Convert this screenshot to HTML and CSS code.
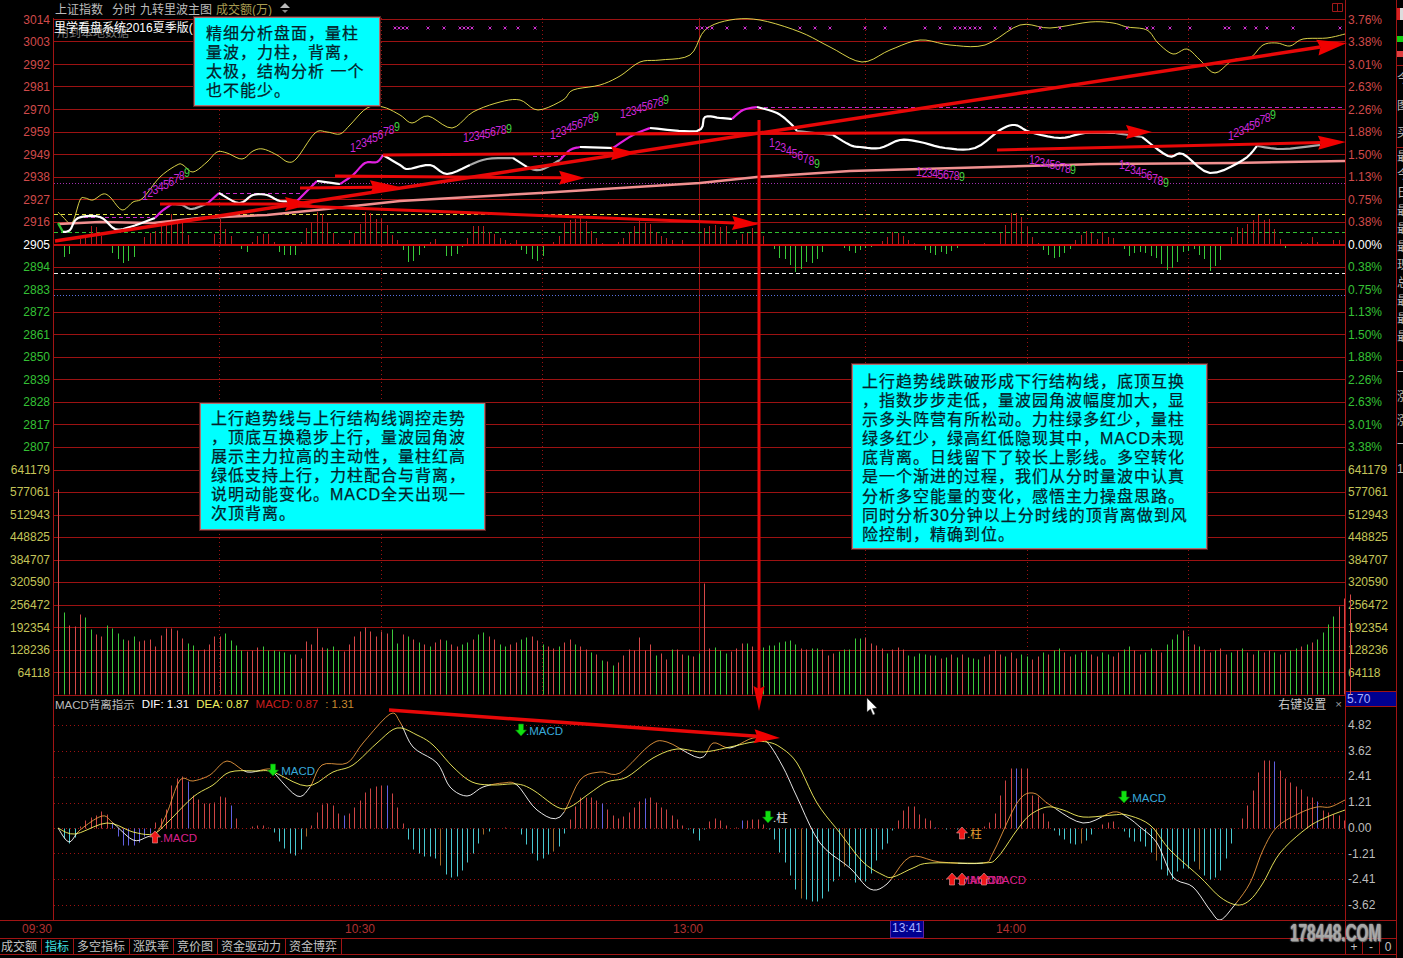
FILE: index.html
```html
<!DOCTYPE html>
<html lang="zh-CN">
<head>
    <meta charset="UTF-8">
    <title>上证指数 分时</title>
    <link rel="stylesheet" href="styles.css">
</head>
<body>
    <div class="terminal">
        <div class="scale-left" id="scaleLeft"></div>

        <div class="plot">
            <svg class="canvas" id="canvas" width="1292" height="920" viewBox="53 0 1292 920"></svg>

            <div class="chart-head">
                <span class="head-name">上证指数</span>
                <span class="head-mode">分时</span>
                <span class="head-main">九转里波主图</span>
                <span class="head-vol">成交额(万)</span>
                <svg class="head-icon" width="12" height="11" viewBox="0 0 12 11">
                    <path d="M6 0 L11 5 L1 5 Z" fill="#bbb"/>
                    <path d="M3 7 L9 7 L6 10 Z" fill="#888"/>
                </svg>
            </div>

            <div class="price-panel">
                <div class="note-under">用到本地数据</div>
                <div class="note-top">里学看盘系统2016夏季版(</div>
                <svg class="pane-icon" width="11" height="9" viewBox="0 0 11 9">
                    <path d="M0.5 0.5 H10.5 V8.5 H0.5 Z M5.5 0.5 V8.5" fill="none" stroke="#a01818"/>
                </svg>

                <div class="callout callout-top">
                    精细分析盘面，量柱<br>
                    量波，力柱，背离，<br>
                    太极，结构分析 一个<br>
                    也不能少。
                </div>
                <div class="callout callout-left">
                    上行趋势线与上行结构线调控走势<br>
                    ，顶底互换稳步上行，量波园角波<br>
                    展示主力拉高的主动性，量柱红高<br>
                    绿低支持上行，力柱配合与背离，<br>
                    说明动能变化。MACD全天出现一<br>
                    次顶背离。
                </div>
                <div class="callout callout-right">
                    上行趋势线跌破形成下行结构线，底顶互换<br>
                    ，指数步步走低，量波园角波幅度加大，显<br>
                    示多头阵营有所松动。力柱绿多红少，量柱<br>
                    绿多红少，绿高红低隐现其中，MACD未现<br>
                    底背离。日线留下了较长上影线。多空转化<br>
                    是一个渐进的过程，我们从分时量波中认真<br>
                    分析多空能量的变化，感悟主力操盘思路。<br>
                    同时分析30分钟以上分时线的顶背离做到风<br>
                    险控制，精确到位。
                </div>
            </div>

            <div class="macd-head">
                <span class="macd-name">MACD背离指示</span>
                <span class="macd-dif">DIF: 1.31</span>
                <span class="macd-dea">DEA: 0.87</span>
                <span class="macd-val">MACD: 0.87</span>
                <span class="macd-extra">: 1.31</span>
                <span class="macd-setting">右键设置</span>
                <span class="macd-close">×</span>
            </div>
        </div>

        <div class="scale-right" id="scaleRight"></div>

        <div class="side">
            <div class="side-stock"></div>
            <div class="side-green"></div>
            <div class="side-red"></div>
            <div class="side-text side-top">今<br>图<br>买</div>
            <div class="side-text side-list">最<br>今<br>日<br>最<br>最<br>最<br>现<br>总<br>最<br>最<br>最</div>
            <div class="side-text side-foot">一<br>涨<br>涨<br>一<br>1</div>
        </div>

        <div class="timeline">
            <span class="tick tick-0930">09:30</span>
            <span class="tick tick-1030">10:30</span>
            <span class="tick tick-1300">13:00</span>
            <span class="tick tick-now">13:41</span>
            <span class="tick tick-1400">14:00</span>
        </div>

        <div class="tabs">
            <span class="tab tab-first">成交额</span>
            <span class="tab tab-on">指标</span>
            <span class="tab">多空指标</span>
            <span class="tab">涨跌率</span>
            <span class="tab">竞价图</span>
            <span class="tab">资金驱动力</span>
            <span class="tab">资金博弈</span>
        </div>

        <div class="zoom-btns">
            <span>+</span>
            <span>-</span>
            <span>0</span>
        </div>

        <div class="watermark">178448.COM</div>
    </div>

    <script src="chart.js"></script>
</body>
</html>
```

FILE: styles.css
```css
html, body {
    margin: 0;
    padding: 0;
    background-color: #000;
    overflow: hidden;
}

body {
    font-family: "Liberation Sans", "Noto Sans CJK SC", sans-serif;
    font-size: 12px;
    color: #bbb;
}

.terminal {
    position: relative;
    display: grid;
    grid-template-columns: 53px 1292px 51px 7px;
    grid-template-rows: 920px 18px 17px 3px;
    width: 1403px;
    height: 958px;
    overflow: hidden;
}

/* price / volume scales */
.scale-left {
    padding-top: 8.6px;
    text-align: right;
    padding-right: 3px;
}

.scale-right {
    box-sizing: border-box;
    border-left: 1px solid #a01414;
    padding-top: 8.6px;
    padding-left: 2px;
}

.row {
    height: 22.53px;
    line-height: 22.53px;
    white-space: nowrap;
}

.up { color: #d04a4a; }
.down { color: #35c035; }
.flat { color: #fff; }
.vol { color: #c4c458; }

.macd-top {
    box-sizing: border-box;
    height: 16px;
    line-height: 14px;
    margin: 7px 0 0 -2px;
    padding-left: 1px;
    background-color: #000090;
    border-top: 1px solid #a01414;
    border-bottom: 1px solid #a01414;
    color: #a8b0ff;
}

.macd-rows {
    padding-top: 6px;
}

.macd-row {
    height: 25.7px;
    line-height: 25.7px;
    color: #bdbdbd;
}

/* main drawing area */
.plot {
    position: relative;
    display: grid;
    grid-template-rows: 18px 677px 225px;
}

.canvas {
    position: absolute;
    top: 0;
    left: 0;
    overflow: visible;
}

.chart-head {
    position: relative;
    display: flex;
    align-items: center;
    height: 16px;
    padding-left: 2px;
    white-space: nowrap;
}

.head-mode { margin-left: 9px; }
.head-main { margin-left: 4px; }
.head-vol { margin-left: 4px; color: #a89c50; }
.head-icon { margin-left: 7px; }

.price-panel {
    position: relative;
}

.note-top, .note-under {
    position: absolute;
    left: 1px;
    white-space: nowrap;
}

.note-top { top: 0; color: #fff; }
.note-under { top: 5px; left: 4px; color: #777; }

.pane-icon {
    position: absolute;
    top: -15px;
    right: 2px;
}

.callout {
    position: absolute;
    box-sizing: border-box;
    background-color: #00ffff;
    border: 1px solid #b07070;
    box-shadow: 0 0 0 1px #5a2020;
    color: #06222a;
    font-size: 16px;
    letter-spacing: 1px;
    line-height: 19.1px;
    white-space: nowrap;
    -webkit-text-stroke: 0.25px #06222a;
}

.callout-top {
    left: 141px;
    top: -1px;
    width: 186px;
    height: 89px;
    padding: 6px 0 0 11px;
}

.callout-left {
    left: 147px;
    top: 385px;
    width: 285px;
    height: 127px;
    padding: 5px 0 0 10px;
}

.callout-right {
    left: 799px;
    top: 346px;
    width: 355px;
    height: 185px;
    padding: 7px 0 0 9px;
}

.macd-head {
    position: relative;
    display: flex;
    align-items: center;
    height: 17px;
    padding-left: 2px;
    font-size: 11.5px;
    white-space: nowrap;
}

.macd-dif { margin-left: 7px; color: #fff; }
.macd-dea { margin-left: 7px; color: #f0f060; }
.macd-val { margin-left: 7px; color: #c81e1e; }
.macd-extra { margin-left: 7px; color: #c88a30; }
.macd-setting { margin-left: auto; margin-right: 9px; font-size: 12px; color: #c8c8c8; }
.macd-close { margin-right: 3px; color: #999; }

/* clipped strip at the right edge */
.side {
    grid-row: 1 / 5;
    grid-column: 4;
    box-sizing: border-box;
    border-left: 1px solid #a01414;
    overflow: hidden;
    color: #b8b8b8;
}

.side-stock {
    height: 12px;
    margin-top: 8px;
    background: linear-gradient(90deg, #d82020 3px, #ddd 3px);
}

.side-green, .side-red {
    height: 6px;
}

.side-green { margin-top: 16px; background-color: #10d010; }
.side-red { margin-top: 9px; background-color: #e04040; }

.side-text {
    white-space: nowrap;
    border-top: 1px solid #a01414;
}

.side-top { margin-top: 8px; line-height: 27px; }
.side-list { line-height: 18px; padding-bottom: 14px; }
.side-foot { line-height: 24px; }

.timeline {
    grid-column: 1 / 4;
    position: relative;
    border-top: 1px solid #a01414;
    box-sizing: border-box;
}

.timeline::after {
    content: "";
    position: absolute;
    left: 1345px;
    top: 0;
    bottom: 0;
    width: 1px;
    background-color: #a01414;
}

.tick {
    position: absolute;
    top: 1px;
    line-height: 15px;
    color: #b03030;
}

.tick-0930 { left: 22px; }
.tick-1030 { left: 345px; }
.tick-1300 { left: 673px; }
.tick-1400 { left: 996px; }

.tick-now {
    left: 890px;
    top: 0;
    width: 32px;
    height: 16px;
    text-align: center;
    background-color: #000090;
    border: 1px solid #5a20a0;
    border-width: 0 1px 1px 1px;
    color: #a8b0ff;
}

.tabs {
    grid-column: 1 / 3;
    display: flex;
    box-sizing: border-box;
    border-top: 1px solid #a01414;
    border-bottom: 1px solid #a01414;
    line-height: 17px;
}

.tab {
    padding: 0 3.5px;
    border-right: 1px solid #a01414;
    color: #c4c4c4;
}

.tab-first { padding-left: 1px; }
.tab-on { color: #40e0e0; }

.zoom-btns {
    grid-column: 3;
    display: flex;
    box-sizing: border-box;
    border-top: 1px solid #a01414;
    border-bottom: 1px solid #a01414;
    border-left: 1px solid #a01414;
    line-height: 17px;
    color: #c4c4c4;
}

.zoom-btns span {
    width: 16px;
    text-align: center;
    border-right: 1px solid #a01414;
}

.zoom-btns span:last-child {
    border-right: none;
}

.watermark {
    position: absolute;
    left: 1290px;
    top: 923px;
    font-weight: bold;
    font-size: 24px;
    line-height: 20px;
    color: #a8a8a8;
    text-shadow: 1px 1px 1px #777, 0 0 2px #ddd;
    white-space: nowrap;
    transform: scaleX(0.64);
    transform-origin: left center;
}
```

FILE: chart.js
```js
const NS = 'http://www.w3.org/2000/svg';
const canvas = document.getElementById('canvas');

const GRID = '#9c1212';
const barX = i => Math.round(58.4 + 5.38 * i) + 0.5;

function add(tag, attrs, text) {
    const el = document.createElementNS(NS, tag);
    for (let k in attrs) el.setAttribute(k, attrs[k]);
    if (text !== undefined) el.textContent = text;
    canvas.appendChild(el);
    return el;
}

function hline(y, x1, x2, color, dash, width) {
    add('line', { x1, y1: y, x2, y2: y, stroke: color, 'stroke-width': width || 1, 'stroke-dasharray': dash || 'none' });
}

function vline(x, y1, y2, color, dash, width) {
    add('line', { x1: x, y1, x2: x, y2, stroke: color, 'stroke-width': width || 1, 'stroke-dasharray': dash || 'none' });
}

// catmull-rom sampling so the lines come out curved
function sample(pts) {
    const out = [];
    for (let i = 0; i < pts.length - 1; i++) {
        const p0 = pts[Math.max(i - 1, 0)], p1 = pts[i], p2 = pts[i + 1], p3 = pts[Math.min(i + 2, pts.length - 1)];
        for (let t = 0; t < 1; t += 0.2) {
            const t2 = t * t, t3 = t2 * t;
            out.push([
                0.5 * (2 * p1[0] + (p2[0] - p0[0]) * t + (2 * p0[0] - 5 * p1[0] + 4 * p2[0] - p3[0]) * t2 + (3 * p1[0] - p0[0] - 3 * p2[0] + p3[0]) * t3),
                0.5 * (2 * p1[1] + (p2[1] - p0[1]) * t + (2 * p0[1] - 5 * p1[1] + 4 * p2[1] - p3[1]) * t2 + (3 * p1[1] - p0[1] - 3 * p2[1] + p3[1]) * t3)
            ]);
        }
    }
    out.push(pts[pts.length - 1]);
    return out;
}

function polyline(pts, color, width) {
    add('polyline', {
        points: pts.map(p => p.join(',')).join(' '),
        fill: 'none', stroke: color, 'stroke-width': width, 'stroke-linejoin': 'round'
    });
}

function bars(items, base, color) {
    // items: [index, height] pairs, positive height goes up
    const d = items.map(([i, h]) => `M${barX(i)} ${base}V${base - h}`).join('');
    add('path', { d, stroke: color, 'stroke-width': 1, fill: 'none' });
}

function arrow(x1, y1, x2, y2, width, len, half) {
    const a = Math.atan2(y2 - y1, x2 - x1);
    const cos = Math.cos(a), sin = Math.sin(a);
    const bx = x2 - cos * len, by = y2 - sin * len;
    const nx = bx + cos * 3, ny = by + sin * 3;
    add('line', { x1, y1, x2: nx, y2: ny, stroke: '#e80808', 'stroke-width': width });
    const head = [
        [x2, y2],
        [bx - sin * half, by + cos * half],
        [nx, ny],
        [bx + sin * half, by - cos * half]
    ];
    add('polygon', { points: head.map(p => p.join(',')).join(' '), fill: '#f00000' });
}

function digits(x1, y1, x2, y2) {
    for (let k = 0; k < 9; k++) {
        const x = x1 + (x2 - x1) * k / 8;
        const y = y1 + (y2 - y1) * k / 8 + 5;
        add('text', {
            transform: `translate(${x} ${y}) scale(0.82 1)`,
            fill: k === 8 ? '#40d040' : '#c828d8',
            'text-anchor': 'middle',
            'font-size': 13
        }, k + 1);
    }
}

function signal(x, y, dir, label, color) {
    const up = 'M0 -6 L5.5 0 L2.5 0 L2.5 6 L-2.5 6 L-2.5 0 L-5.5 0 Z';
    const down = 'M-2.5 -6 L2.5 -6 L2.5 0 L5.5 0 L0 6 L-5.5 0 L-2.5 0 Z';
    add('path', {
        d: dir === 'up' ? up : down,
        transform: `translate(${x} ${y})`,
        fill: dir === 'up' ? '#f01818' : '#10e010',
        stroke: dir === 'up' ? '#e8a0a0' : '#087008',
        'stroke-width': 0.6
    });
    add('text', { x: x + 5, y: y + 5, fill: color, 'font-size': 11.5 }, label);
}

/* ---------- scales ---------- */
function fillScales() {
    const prices = ['3014', '3003', '2992', '2981', '2970', '2959', '2949', '2938', '2927', '2916', '2905',
        '2894', '2883', '2872', '2861', '2850', '2839', '2828', '2817', '2807'];
    const pcts = ['3.76%', '3.38%', '3.01%', '2.63%', '2.26%', '1.88%', '1.50%', '1.13%', '0.75%', '0.38%', '0.00%',
        '0.38%', '0.75%', '1.13%', '1.50%', '1.88%', '2.26%', '2.63%', '3.01%', '3.38%'];
    const volumes = ['641179', '577061', '512943', '448825', '384707', '320590', '256472', '192354', '128236', '64118'];
    const cls = i => (i < 10 ? 'up' : i === 10 ? 'flat' : 'down');

    const row = (text, c) => `<div class="row ${c}">${text}</div>`;
    document.getElementById('scaleLeft').innerHTML =
        prices.map((t, i) => row(t, cls(i))).join('') + volumes.map(t => row(t, 'vol')).join('');

    const macd = ['4.82', '3.62', '2.41', '1.21', '0.00', '-1.21', '-2.41', '-3.62'];
    document.getElementById('scaleRight').innerHTML =
        pcts.map((t, i) => row(t, cls(i))).join('') + volumes.map(t => row(t, 'vol')).join('') +
        '<div class="macd-top">5.70</div><div class="macd-rows">' +
        macd.map(t => `<div class="macd-row">${t}</div>`).join('') + '</div>';
}

/* ---------- grid ---------- */
function drawGrid() {
    for (let k = 0; k <= 30; k++) {
        if (k === 10) continue;
        hline(Math.round(18.9 + 22.53 * k) + 0.5, 53, 1345, GRID);
    }
    [219.5, 381.5, 542.5, 865.5, 1027.5, 1188.5].forEach(x => vline(x, 18, 695, GRID, '1 3'));
    vline(699.5, 18, 695, GRID);
    vline(53.5, 18, 920, '#a01414');

    [725.5, 751.5, 777.5, 803.5, 828.5, 853.5, 879.5, 905.5].forEach(y => hline(y, 54, 1345, GRID, '1 3'));

    hline(183.5, 54, 1345, '#a030b0', '1 2');
    hline(214.5, 54, 1345, '#e0e040', '4 3');
    hline(232.5, 54, 1345, '#30c030', '4 3');
    hline(273.5, 54, 1345, '#f0f0f0', '4 3');
    hline(295.5, 54, 1345, '#5a70e0', '1 2');

    hline(217.5, 77, 150, '#c828c8', '4 3');
    hline(193.5, 219, 300, '#c828c8', '4 3');
    hline(156.5, 533, 562, '#c828c8', '4 3');
    hline(107.5, 757, 1345, '#c828c8', '4 3');
}

/* ---------- volume ---------- */
const VOL = [205, -82, 69, 68, 80, -77, -65, 60, 58, -69, -66, -61, -55, 54, -58, 53, 54, 55, 48, 59, 66, 66, 64, 56, -51, -49, 44, 45, 50, 58, 58, -61, -54, -49, -44, 43, 44, 47, -48, -44, -44, -43, -42, -40, 40, 36, 53, 50, 66, 47, -46, -48, -44, 43, 50, 58, 63, 67, 63, 58, 63, 61, -65, -51,
    60, -58, 55, -52, 50, -48, 52, 55, -54, 50, 48, -50, -52, 55, -60, -62, 58, 55, -50, -48, 50, 52, -55, -57, 58, 54, -50, 48, 46, -48, 52, 55, -50, 48, 45, -42, 40,
    -34, 33, -29, 32, 39, 45, 44, 57, 44, 50, -39, 41, 35, -45, 45, 40, -39, 38, -41, 111, 46, -47, -44, -41, 43, 46, 51, -51, 48, -49, -47, -49, -49, -52, -53, -54, -50, 46, 45, -46, -46, 45, 39, 41, -43, -45, -45, -56, -56, 57, 51, 49, 46, -41, 45, 47, 45, -39, -38, -41, -40, 39, -39, 36, -37, 40, -37, 40, -37, -36, -35, 38, 40, 44,
    40, -38, 42, 36, -40, -38, 35, 38, -42, 40, -44, -46, 42, 38, -40, -42, -44, 40, 38, -42, -40, 38, 42, -45, -48, 44, 40, -42, -46, 44, 42, -50, -55, -60, 64, -58, 50, -48, 45, 42, -44, 46, 40, -42, 44, -46, 42, 40, -44, 42, 44, -42, 40, 42, -44, -46, 48, -50, 52, -55, -62, -70, -78, 88, 96, 100];

const HIST = [0, -12, -9, 0, 6, 7, 19, 18, 9, 1, -8, -14, -18, -16, -12, 0, 8, 12, 14, 20, 24, 31, 26, 22, 10, 1, 1, -1, -1, 11, 26, 16, 9, 0, -4, -7, 3, 9, 11, 11, 3, -7, -10, -10, -10, 3, 17, 23, 33, 31, 22, 12, 2, 1, 5, 12, 21, 33, 32, 26, 26, 20, 10, 5,
    -5, -17, -16, -10, -3, 3, 6, 0, -11, -11, -9, -2, 7, 19, 19, 19, 13, 11, 7, 5, 2, 5, -5, -9, -14, -16, -11, -1, 3, 9, 22, 25, 26, 28, 24, 14, 7, 2, 0, 1, 3, 7, 13, 19, 24, 22, 21, 13, 9, 7, 5, 0, 5, 1, 0, 0, 17, 19, 20, 18, 19, 0, 5, 11, 12, 17, 15, 9, 1, -4, -13, -14, -20, -27, -24, -17, -18, -14, -7, 1, 1, 0, -3,
    -6, -8, -5, -3, -2, 1, 4, 8, 13, 12, 9, 5, 2, 0, -5, -8, -10, -7, -9, -6, -3, 1, -1, 0, 1, 2, -1, 1, 12, 20, 32, 32, 28, 18, 8, 2, -5, -10, -13, -12, -8, -4, 5, 10, 14, 12, 6,
    13, 8, 7, 1, -4, -11, -8, -7, -8, -11, -13, -19, -25, -23, -17, -7, -6, -4, -10, -14, -26, -21, -15, -1, 8, 18, 17, 21, 25, 30, 25, 26, 16, 6, -3, -1, -1, 3, 2, 8, 3, 0, 0, 5, 5, 1];

const MACD = [0, -10, -15, -9, 2, 8, 11, 13, 17, 14, 6, -8, -17, -17, -17, -14, -8, -5, 6, 10, 19, 43, 50, 52, 47, 33, 29, 25, 25, 26, 32, 31, 23, 10, 0, 0, 2, 3, 3, 1, -4, -13, -20, -25, -27, -21, -8, 3, 16, 24, 25, 23, 15, 13, 15, 21, 28, 36, 40, 42, 43, 43, 35, 21,
    5, -11, -21, -25, -28, -28, -30, -37, -46, -49, -48, -42, -34, -25, -15, -6, -3, 0, 0, 1, 0, 0, -6, -16, -25, -32, -30, -26, -23, -18, -5, 9, 22, 31, 31, 31, 28, 25, 19, 13, 10, 12, 16, 21, 27, 30, 31, 26, 21, 19, 13, 9, 3, -1, -5, -12, -1, 7, 10, 8, 3, 0, 1, 8, 8, 9, 9, 4, -1, -11, -24, -34, -47, -61, -70, -71, -73, -73, -70, -63, -53, -48, -38, -38,
    -54, -52, -53, -45, -32, -21, -15, -2, 8, 18, 22, 22, 14, 10, 8, 1, 0, -1, 0, -1, 0, 0, 0, 0, 2, 6, 15, 33, 48, 60, 60, 60, 60, 33, 32, 15, 7, -2, -7, -11, -15, -16, -15, -12, -6, 0, 4, 6, 7, 1, -3, -9, -13, -13, -18, -24, -32, -41, -47, -51, -43, -40, -40, -33, -41, -47, -51, -49, -42, -30, -15, 0, 10, 23, 38, 56, 68, 68, 67, 58, 50, 46, 42, 39, 32, 31, 27, 18, 16, 14, 13, 8];

const BLUE = [10, 11, 12, 13, 14, 15, 16, 17, 24, 32, 53, 61, 101, 109, 127, 163, 178, 226, 234];
const BROWN = [46, 71, 79, 92, 138, 146, 190, 204, 212];

function pairs(list, test) {
    return list.map((h, i) => [i, h]).filter(([i, h]) => test(i, h));
}

function drawBars() {
    bars(pairs(VOL, (i, h) => h > 0), 694.5, '#d44848');
    bars(pairs(VOL, (i, h) => h < 0).map(([i, h]) => [i, -h]), 694.5, '#3cc83c');

    bars(pairs(HIST, (i, h) => h > 0), 245, '#b81c1c');
    bars(pairs(HIST, (i, h) => h < 0), 245, '#38c838');
    hline(245, 54, 1345, '#c40a0a', 'none', 2);

    const plain = i => !BLUE.includes(i) && !BROWN.includes(i);
    bars(pairs(MACD, (i, h) => h > 0 && plain(i)), 828.5, '#cc4444');
    bars(pairs(MACD, (i, h) => h < 0 && plain(i)), 828.5, '#48c8d0');
    bars(pairs(MACD, (i, h) => h !== 0 && BLUE.includes(i)), 828.5, '#6060e0');
    bars(pairs(MACD, (i, h) => h !== 0 && BROWN.includes(i)), 828.5, '#a06828');
}

/* ---------- lines ---------- */
const YELLOW = [[58, 212], [63, 217], [72, 223], [80, 200], [85, 198], [93, 200], [103, 194], [110, 197], [122, 210], [133, 202], [143, 198], [160, 177], [177, 165], [183, 165], [193, 172], [207, 162], [217, 152], [227, 153], [242, 159], [253, 151], [263, 149], [277, 155], [288, 162], [297, 158], [315, 133], [327, 132], [340, 134], [350, 125], [367, 108], [383, 107], [400, 115], [412, 123], [428, 116], [452, 128], [473, 112], [500, 102], [520, 100], [538, 110], [563, 100], [573, 90], [600, 85], [620, 76], [640, 62], [660, 60], [690, 55], [705, 30], [730, 20], [760, 20], [800, 32], [830, 47], [862, 62], [890, 50], [920, 40], [950, 45], [985, 45], [1020, 25], [1050, 28], [1090, 22], [1113, 23], [1127, 27], [1147, 30], [1158, 43], [1173, 54], [1187, 49], [1200, 60], [1215, 73], [1233, 60], [1250, 58], [1263, 45], [1277, 43], [1290, 46], [1303, 39], [1327, 38], [1345, 34]];

const PRICE = [
    ['#30c030', [[58, 223], [63, 232]]],
    ['#fff', [[63, 232], [70, 230], [78, 218], [100, 217], [115, 229], [130, 227], [155, 218]]],
    ['#e020e0', [[155, 218], [162, 211], [172, 204]]],
    ['#aaa', [[172, 204], [182, 205], [192, 209], [208, 203]]],
    ['#e020e0', [[208, 203], [219, 193]]],
    ['#fff', [[219, 193], [235, 202], [243, 202], [253, 195], [267, 195], [280, 201], [297, 201]]],
    ['#e020e0', [[297, 201], [317, 181]]],
    ['#fff', [[317, 181], [340, 184]]],
    ['#e020e0', [[340, 184], [353, 175], [365, 163], [377, 162], [383, 155]]],
    ['#fff', [[383, 155], [400, 165], [408, 169], [430, 165], [447, 174], [470, 165]]],
    ['#aaa', [[470, 165], [487, 159], [513, 158]]],
    ['#fff', [[513, 158], [527, 167]]],
    ['#aaa', [[527, 167], [540, 170], [560, 160]]],
    ['#e020e0', [[560, 160], [570, 150], [580, 147]]],
    ['#fff', [[580, 147], [613, 148]]],
    ['#e020e0', [[613, 148], [633, 135], [650, 128]]],
    ['#fff', [[650, 128], [697, 131], [705, 117], [720, 118], [732, 119]]],
    ['#e020e0', [[732, 119], [743, 110], [757, 107]]],
    ['#fff', [[757, 107], [777, 113], [790, 123], [797, 131]]],
    ['#aaa', [[797, 131], [833, 135]]],
    ['#fff', [[833, 135], [850, 145], [860, 147], [880, 148], [900, 140], [920, 142], [945, 148], [975, 148], [1000, 130], [1015, 125], [1030, 132], [1060, 138], [1085, 133], [1115, 133]]],
    ['#aaa', [[1115, 133], [1142, 137]]],
    ['#fff', [[1142, 137], [1168, 156], [1183, 154], [1210, 173], [1243, 160], [1257, 146]]],
    ['#aaa', [[1257, 146], [1283, 149], [1320, 145]]]
];

const AVERAGE = [[58, 224], [100, 222], [153, 223], [200, 218], [267, 215], [317, 210], [400, 201], [540, 193], [700, 183], [757, 177], [850, 171], [1100, 164], [1233, 163], [1345, 161]];

const DEA = [[58, 828], [75, 834], [107, 823], [133, 832], [153, 834], [167, 823], [193, 797], [213, 785], [230, 772], [257, 771], [273, 772], [307, 786], [333, 772], [353, 765], [377, 743], [397, 728], [417, 735], [433, 745], [453, 767], [472, 782], [493, 785], [517, 784], [533, 790], [557, 807], [570, 807], [590, 793], [607, 782], [627, 777], [653, 758], [677, 749], [703, 752], [730, 747], [753, 742], [767, 742], [780, 747], [797, 763], [817, 803], [840, 833], [863, 862], [883, 875], [893, 877], [913, 868], [930, 863], [983, 863], [997, 858], [1017, 830], [1030, 815], [1047, 807], [1063, 810], [1083, 817], [1113, 815], [1127, 815], [1150, 825], [1170, 850], [1200, 877], [1220, 897], [1237, 905], [1250, 900], [1263, 883], [1280, 853], [1307, 828], [1327, 817], [1345, 810]];

const DIF = [[58, 828], [69, 842], [80, 830], [102, 816], [113, 823], [133, 840], [147, 837], [157, 832], [167, 813], [180, 780], [193, 781], [210, 775], [227, 761], [247, 772], [267, 769], [273, 772], [297, 796], [310, 787], [322, 765], [347, 763], [363, 743], [390, 714], [400, 722], [413, 747], [437, 763], [450, 787], [467, 796], [483, 787], [503, 783], [517, 785], [537, 810], [560, 817], [580, 780], [600, 772], [620, 773], [650, 745], [667, 742], [700, 758], [713, 743], [730, 748], [753, 738], [767, 742], [783, 767], [797, 797], [820, 843], [850, 868], [870, 889], [887, 884], [910, 857], [940, 862], [983, 863], [993, 853], [1017, 803], [1033, 793], [1050, 805], [1083, 823], [1113, 812], [1127, 817], [1140, 827], [1157, 843], [1173, 877], [1193, 887], [1210, 910], [1220, 920], [1233, 907], [1250, 883], [1263, 850], [1277, 827], [1300, 813], [1317, 807], [1330, 807], [1345, 800]];

function yAt(line, x) {
    for (let i = 0; i < line.length - 1; i++) {
        if (x <= line[i + 1][0]) {
            const t = (x - line[i][0]) / (line[i + 1][0] - line[i][0]);
            return line[i][1] + (line[i + 1][1] - line[i][1]) * t;
        }
    }
    return line[line.length - 1][1];
}

function drawLines() {
    polyline(sample(YELLOW), '#f0e850', 0.9);
    polyline(AVERAGE, '#f09090', 2.5);
    PRICE.forEach(([color, pts]) => polyline(sample(pts), color, 2.2));

    // DIF is orange above DEA and white below it
    const dif = sample(DIF), dea = sample(DEA);
    for (let i = 0; i < dif.length - 1; i++) {
        const mid = (dif[i][0] + dif[i + 1][0]) / 2;
        const above = (dif[i][1] + dif[i + 1][1]) / 2 < yAt(dea, mid);
        polyline([dif[i], dif[i + 1]], above ? '#e89840' : '#fff', 0.9);
    }
    polyline(dea, '#f8f460', 0.9);
}

/* ---------- markers on top ---------- */
const CROSSES = [395, 399, 403, 407, 428, 444, 460, 464, 468, 472, 490, 505, 518, 535, 697, 702, 707, 712, 727, 745, 760, 800, 815, 830, 865, 885, 925, 940, 955, 960, 965, 970, 975, 980, 995, 1010, 1040, 1060, 1127, 1147, 1153, 1170, 1190, 1225, 1229, 1245, 1256, 1267, 1293, 1340];

function drawMarks() {
    const d = CROSSES.map(x => `M${x - 1.5} 26.5l3 3m0 -3l-3 3`).join('');
    add('path', { d, stroke: '#d030d0', 'stroke-width': 1, fill: 'none' });

    digits(145, 195, 187, 172);
    digits(353, 147, 397, 126);
    digits(466, 137, 509, 128);
    digits(553, 134, 596, 116);
    digits(623, 113, 666, 99);
    digits(772, 142, 817, 163);
    digits(919, 171, 962, 176);
    digits(1032, 159, 1073, 169);
    digits(1122, 164, 1166, 182);
    digits(1231, 135, 1273, 114);

    arrow(55, 241, 1347, 43, 3.5, 30, 8);
    arrow(160, 204, 313, 204, 3, 28, 7);
    arrow(300, 188, 400, 187, 3, 30, 7);
    arrow(335, 176, 585, 178, 3, 26, 7);
    arrow(383, 155, 637, 153, 3, 26, 7);
    arrow(616, 134, 1152, 132, 3, 26, 7);
    arrow(997, 150, 1346, 142, 3, 28, 7);
    arrow(298, 206, 760, 224, 3, 28, 7);
    arrow(759, 120, 759, 711, 3, 25, 5.5);
    arrow(389, 710, 780, 738, 3.5, 26, 7);

    signal(155, 837, 'up', '.MACD', '#d8208c');
    signal(273, 770, 'down', '.MACD', '#38a8d8');
    signal(521, 730, 'down', '.MACD', '#38a8d8');
    signal(768, 817, 'down', '.柱', '#e8e8e8');
    signal(962, 833, 'up', '.柱', '#e8a030');
    signal(952, 879, 'up', '.MACD', '#d8208c');
    signal(962, 879, 'up', '.MACD', '#d8208c');
    signal(984, 879, 'up', '.MACD', '#d8208c');
    signal(1124, 797, 'down', '.MACD', '#38a8d8');

    // mouse pointer
    add('path', { d: 'M867 698 V712 L870.5 709 L873 715 L875 714 L872.5 708.5 L877 708 Z', fill: '#fff', stroke: '#333', 'stroke-width': 0.5 });
}

fillScales();
drawGrid();
drawBars();
drawLines();
drawMarks();
```
